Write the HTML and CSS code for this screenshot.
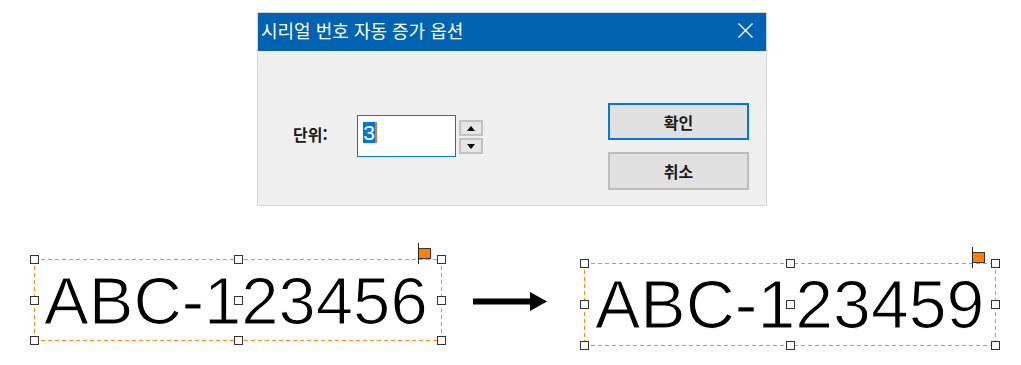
FILE: index.html
```html
<!DOCTYPE html>
<html lang="ko">
<head>
<meta charset="utf-8">
<link rel="stylesheet" href="styles.css">
</head>
<body>
<div class="page">
  <div class="dialog">
    <div class="titlebar">
      <span class="title">시리얼 번호 자동 증가 옵션</span>
      <svg class="close" width="15" height="15" viewBox="0 0 15 15"><path d="M0.5 0.5 L14.5 14.5 M14.5 0.5 L0.5 14.5" stroke="#fff" stroke-width="1.4" fill="none"/></svg>
    </div>
    <div class="dlg-body">
      <div class="field">
        <span class="lbl">단위:</span>
        <div class="input"><span class="sel">3</span><span class="caret"></span></div>
        <div class="spin">
          <div class="spin-btn"><svg width="8" height="5" viewBox="0 0 8 5"><path d="M0 5 L4 0 L8 5 Z" fill="#000"/></svg></div>
          <div class="spin-btn"><svg width="8" height="5" viewBox="0 0 8 5"><path d="M0 0 L8 0 L4 5 Z" fill="#000"/></svg></div>
        </div>
      </div>
      <div class="buttons">
        <div class="btn btn-ok">확인</div>
        <div class="btn btn-cancel">취소</div>
      </div>
    </div>
  </div>

  <div class="labels">
    <div class="lbox lbox-a">
      <span class="ltext">ABC-123456</span>
      <span class="flag"></span>
      <span class="h h-tl"></span><span class="h h-tc"></span><span class="h h-tr"></span>
      <span class="h h-ml"></span><span class="h h-mc"></span><span class="h h-mr"></span>
      <span class="h h-bl"></span><span class="h h-bc"></span><span class="h h-br"></span>
    </div>
    <svg class="arrow" width="74" height="19" viewBox="0 0 74 19"><rect x="0" y="6.5" width="58" height="6" fill="#000"/><path d="M57 0 L74 9.5 L57 19 Z" fill="#000"/></svg>
    <div class="lbox lbox-b">
      <span class="ltext">ABC-123459</span>
      <span class="flag"></span>
      <span class="h h-tl"></span><span class="h h-tc"></span><span class="h h-tr"></span>
      <span class="h h-ml"></span><span class="h h-mc"></span><span class="h h-mr"></span>
      <span class="h h-bl"></span><span class="h h-bc"></span><span class="h h-br"></span>
    </div>
  </div>
</div>
</body>
</html>
```

FILE: styles.css
```css
* { box-sizing: border-box; }
html, body { margin: 0; padding: 0; background: #fff; }
body { font-family: "Noto Sans CJK KR", "Noto Sans", sans-serif; color: #000; }
.page { width: 1021px; height: 365px; overflow: hidden; padding-top: 12px; }

.dialog {
  margin-left: 257px;
  width: 510px;
  height: 194px;
  border: 1px solid #d6d6d6;
  background: #f0f0f0;
}
.titlebar {
  height: 38px;
  background: #0063b1;
  display: flex;
  align-items: center;
  justify-content: space-between;
  padding: 0 13px 0 3px;
}
.title { color: #fff; font-size: 18px; line-height: 38px; margin-top: -4px; }
.close { display: block; margin-top: -3px; }

.dlg-body {
  display: flex;
  justify-content: space-between;
  align-items: flex-start;
  padding: 52px 17px 0 35px;
}
.field { display: flex; align-items: flex-start; margin-top: 12px; }
.lbl { width: 64px; font-size: 16px; font-weight: 700; line-height: 38px; color: #1a1a1a; }
.input {
  width: 99px; height: 42px;
  border: 1px solid #0078d7;
  background: #fff;
  display: flex;
  align-items: flex-start;
  padding: 6px 0 0 5px;
}
.sel {
  display: block;
  background: #0078d7;
  color: #fff;
  font-family: "Liberation Sans", sans-serif;
  font-size: 21px;
  line-height: 21px;
  height: 21px;
  width: 12px;
  text-align: center;
}
.caret { display: block; width: 2px; height: 21px; background: #e07b1b; }
.spin { display: flex; flex-direction: column; gap: 2px; margin-left: 3px; margin-top: 5px; }
.spin-btn {
  width: 24px; height: 16px;
  border: 2px solid #c2c2c2;
  background: #e6e6e6;
  display: flex; align-items: center; justify-content: center;
}
.spin-btn svg { display: block; }

.buttons { display: flex; flex-direction: column; gap: 12px; }
.btn {
  width: 141px; height: 37px;
  background: #e1e1e1;
  border: 2px solid #bdbdbd;
  display: flex; align-items: center; justify-content: center;
  font-size: 16px; font-weight: 700; color: #1a1a1a;
}
.btn-ok { border-color: #0078d7; }
.btn-cancel { height: 38px; }

.labels {
  display: flex;
  align-items: flex-start;
  margin-top: 53px;
  padding-left: 34px;
}
.lbox {
  position: relative;
  padding: 8px 0 0 10px;
  background:
    repeating-linear-gradient(90deg, #ff8a1c 0 4px, transparent 4px 7px) left top / 100% 1px no-repeat,
    repeating-linear-gradient(90deg, #ff8a1c 0 4px, transparent 4px 7px) left bottom / 100% 1px no-repeat,
    repeating-linear-gradient(180deg, #ff8a1c 0 4px, transparent 4px 7px) left top / 1px 100% no-repeat,
    repeating-linear-gradient(180deg, #ff8a1c 0 4px, transparent 4px 7px) right top / 1px 100% no-repeat;
}
.lbox-a { width: 408px; height: 82px; }
.lbox-b { width: 412px; height: 83px; margin-left: 37px; margin-top: 4px; padding-left: 11px; }
.ltext {
  display: block;
  font-family: "Liberation Sans", Arial, sans-serif;
  font-size: 67px;
  line-height: 67px;
  white-space: nowrap;
  color: #000;
  -webkit-text-stroke: 1.2px #fff;
}
.lbox-b .ltext { font-size: 68px; }
.arrow { display: block; margin-left: 31px; margin-top: 33px; }

.h {
  position: absolute;
  width: 9px; height: 9px;
  border: 1.5px solid #333;
  background: #fff;
  z-index: 2;
}
.h-tl, .h-tc, .h-tr { top: -4px; }
.h-ml, .h-mc, .h-mr { top: calc(50% - 4.5px); }
.h-bl, .h-bc, .h-br { bottom: -4px; }
.h-tl, .h-ml, .h-bl { left: -4px; }
.h-tc, .h-mc, .h-bc { left: calc(50% - 4.5px); }
.h-tr, .h-mr, .h-br { right: -4px; }

.flag {
  position: absolute;
  right: 11px;
  top: -11px;
  width: 13px; height: 11px;
  background: #ff8000;
  border: 1.5px solid #333;
  z-index: 2;
}
.flag::before {
  content: "";
  position: absolute;
  left: -1.5px;
  top: -6px;
  width: 1.5px;
  height: 21px;
  background: #222;
}
```
